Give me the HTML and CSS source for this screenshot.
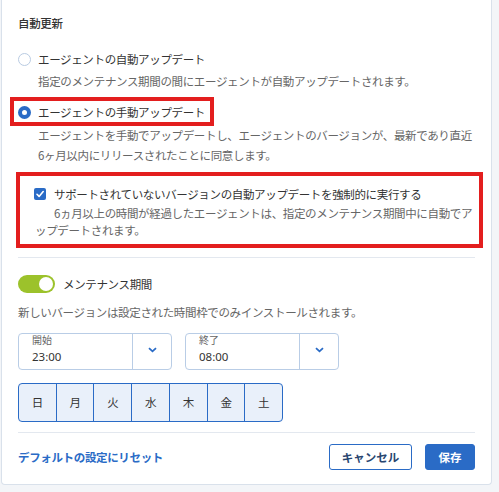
FILE: index.html
```html
<!DOCTYPE html>
<html lang="ja">
<head>
<meta charset="utf-8">
<link rel="stylesheet" href="styles.css">
</head>
<body>
<div class="card">
  <h2 class="title">自動更新</h2>

  <label class="option-row first">
    <span class="radio"></span>
    <span>エージェントの自動アップデート</span>
  </label>
  <p class="desc">指定のメンテナンス期間の間にエージェントが自動アップデートされます。</p>

  <label class="option-row hl">
    <span class="radio checked"></span>
    <span>エージェントの手動アップデート</span>
  </label>
  <p class="desc tight">エージェントを手動でアップデートし、エージェントのバージョンが、最新であり直近6ヶ月以内にリリースされたことに同意します。</p>

  <div class="force">
    <label class="check-row">
      <span class="checkbox"><svg width="12" height="12" viewBox="0 0 12 12"><polyline points="3,6.3 5.1,8.4 9.2,3.6" fill="none" stroke="#fff" stroke-width="1.6" stroke-linecap="round" stroke-linejoin="round"/></svg></span>
      <span>サポートされていないバージョンの自動アップデートを強制的に実行する</span>
    </label>
    <p class="force-desc">6ヵ月以上の時間が経過したエージェントは、指定のメンテナンス期間中に自動でアップデートされます。</p>
  </div>

  <div class="sep first-sep"></div>

  <div class="toggle-row">
    <span class="toggle"><span class="knob"></span></span>
    <span>メンテナンス期間</span>
  </div>
  <p class="desc plain">新しいバージョンは設定された時間枠でのみインストールされます。</p>

  <div class="times">
    <div class="select">
      <div class="select-val">
        <span class="lbl">開始</span>
        <span class="val">23:00</span>
      </div>
      <div class="select-btn"><svg width="9" height="6" viewBox="0 0 9 6"><polyline points="1,1.2 4.5,4.4 8,1.2" fill="none" stroke="#2a6bc6" stroke-width="1.8"/></svg></div>
    </div>
    <div class="select">
      <div class="select-val">
        <span class="lbl">終了</span>
        <span class="val">08:00</span>
      </div>
      <div class="select-btn"><svg width="9" height="6" viewBox="0 0 9 6"><polyline points="1,1.2 4.5,4.4 8,1.2" fill="none" stroke="#2a6bc6" stroke-width="1.8"/></svg></div>
    </div>
  </div>

  <div class="days">
    <span class="day">日</span>
    <span class="day">月</span>
    <span class="day">火</span>
    <span class="day">水</span>
    <span class="day">木</span>
    <span class="day">金</span>
    <span class="day">土</span>
  </div>

  <div class="sep second-sep"></div>

  <div class="footer">
    <a class="reset">デフォルトの設定にリセット</a>
    <div class="buttons">
      <button class="btn cancel">キャンセル</button>
      <button class="btn save">保存</button>
    </div>
  </div>
</div>
</body>
</html>
```

FILE: styles.css
```css
* { box-sizing: border-box; }
html, body { margin: 0; padding: 0; }
body {
  background: #f3f5f8;
  font-family: "Noto Sans CJK JP", "Noto Sans", sans-serif;
  font-size: 11.5px;
  letter-spacing: -0.35px;
  color: #333;
  width: 499px;
  height: 492px;
  overflow: hidden;
}
.card {
  margin-left: 1px;
  width: 491px;
  background: #fff;
  border: 1px solid #d9e1eb;
  border-top: none;
  border-radius: 0 0 4px 4px;
  padding: 13px 16px 14px 16px;
}
.title {
  margin: 0;
  font-size: 11.5px;
  font-weight: 500;
  line-height: 20px;
  color: #333;
}
.option-row {
  display: flex;
  align-items: center;
  gap: 7px;
  line-height: 20px;
}
.option-row.first { margin-top: 16px; }
.option-row.hl {
  width: fit-content;
  margin-left: -8px;
  margin-top: 6.5px;
  border: 4px solid #e31e1e;
  padding: 1px 5px 0 4px;
}
.radio {
  width: 13px;
  height: 13px;
  border-radius: 50%;
  border: 1px solid #b9cbe2;
  background: #fff;
  flex: none;
}
.radio.checked {
  border: 4px solid #2a6bc6;
}
.desc {
  margin: 1.5px 0 0 20px;
  color: #666;
  line-height: 20px;
}
.desc.tight { margin-top: -1px; }
.desc.plain { margin: 7.7px 0 0 0; }
.force {
  margin: 7px -8px 0 -2px;
  border: 4px solid #e31e1e;
  padding: 8px 1px 5.5px 15px;
}
.check-row {
  display: flex;
  align-items: center;
  gap: 8px;
  line-height: 20px;
  margin-left: -1px;
}
.checkbox {
  width: 12px;
  height: 12px;
  border-radius: 2px;
  background: #2a6bc6;
  flex: none;
  display: flex;
}
.force-desc {
  margin: 0.5px 0 0 0;
  text-indent: 19px;
  line-height: 17px;
  color: #666;
  line-break: loose;
}
.sep {
  height: 1px;
  background: #e3e8ef;
}
.first-sep { margin-top: 9px; }
.second-sep { margin-top: 9.7px; }
.toggle-row {
  margin-top: 16px;
  display: flex;
  align-items: center;
  gap: 8px;
  line-height: 20px;
}
.toggle {
  width: 37px;
  height: 18px;
  border-radius: 9px;
  background: #9cc22b;
  display: flex;
  justify-content: flex-end;
  align-items: center;
  padding: 0 2px;
}
.knob {
  width: 14px;
  height: 14px;
  border-radius: 50%;
  background: #fff;
}
.times {
  margin-top: 11.3px;
  display: flex;
  gap: 13px;
}
.select {
  width: 154px;
  height: 37px;
  border: 1px solid #b9cde6;
  border-radius: 4px;
  display: flex;
}
.select-val {
  flex: 1;
  display: flex;
  flex-direction: column;
  padding-left: 13px;
  border-right: 1px solid #b9cde6;
}
.lbl {
  font-size: 10px;
  line-height: 12px;
  color: #666;
  letter-spacing: 0;
}
.val {
  margin-top: 3px;
  font-family: "Noto Sans", sans-serif;
  font-size: 11.5px;
  line-height: 16px;
  color: #333;
  letter-spacing: 0;
}
.select-btn {
  width: 38px;
  display: flex;
  align-items: center;
  justify-content: center;
  padding-bottom: 2px;
}
.days {
  margin-top: 13px;
  width: 265px;
  height: 39px;
  display: flex;
  border: 1px solid #2a6bc6;
  border-radius: 4px;
  background: #e9f0fa;
  overflow: hidden;
}
.day {
  flex: 1;
  display: flex;
  align-items: center;
  justify-content: center;
  border-left: 1px solid #2a6bc6;
  font-size: 11.5px;
  color: #333;
}
.day:first-child { border-left: none; }
.footer {
  margin-top: 11.3px;
  display: flex;
  align-items: center;
  justify-content: space-between;
}
.reset {
  color: #2a6bc6;
  font-weight: 600;
  font-size: 11.5px;
  line-height: 20px;
}
.buttons {
  display: flex;
  gap: 13px;
}
.btn {
  height: 26px;
  border-radius: 3px;
  font-family: "Noto Sans CJK JP", sans-serif;
  font-size: 11.5px;
  font-weight: 700;
  letter-spacing: 0;
  padding: 0;
}
.cancel {
  width: 83px;
  background: #fff;
  border: 1px solid #2a6bc6;
  color: #27456f;
}
.save {
  width: 50px;
  background: #2a6bc6;
  border: 1px solid #2a6bc6;
  color: #fff;
}
```
